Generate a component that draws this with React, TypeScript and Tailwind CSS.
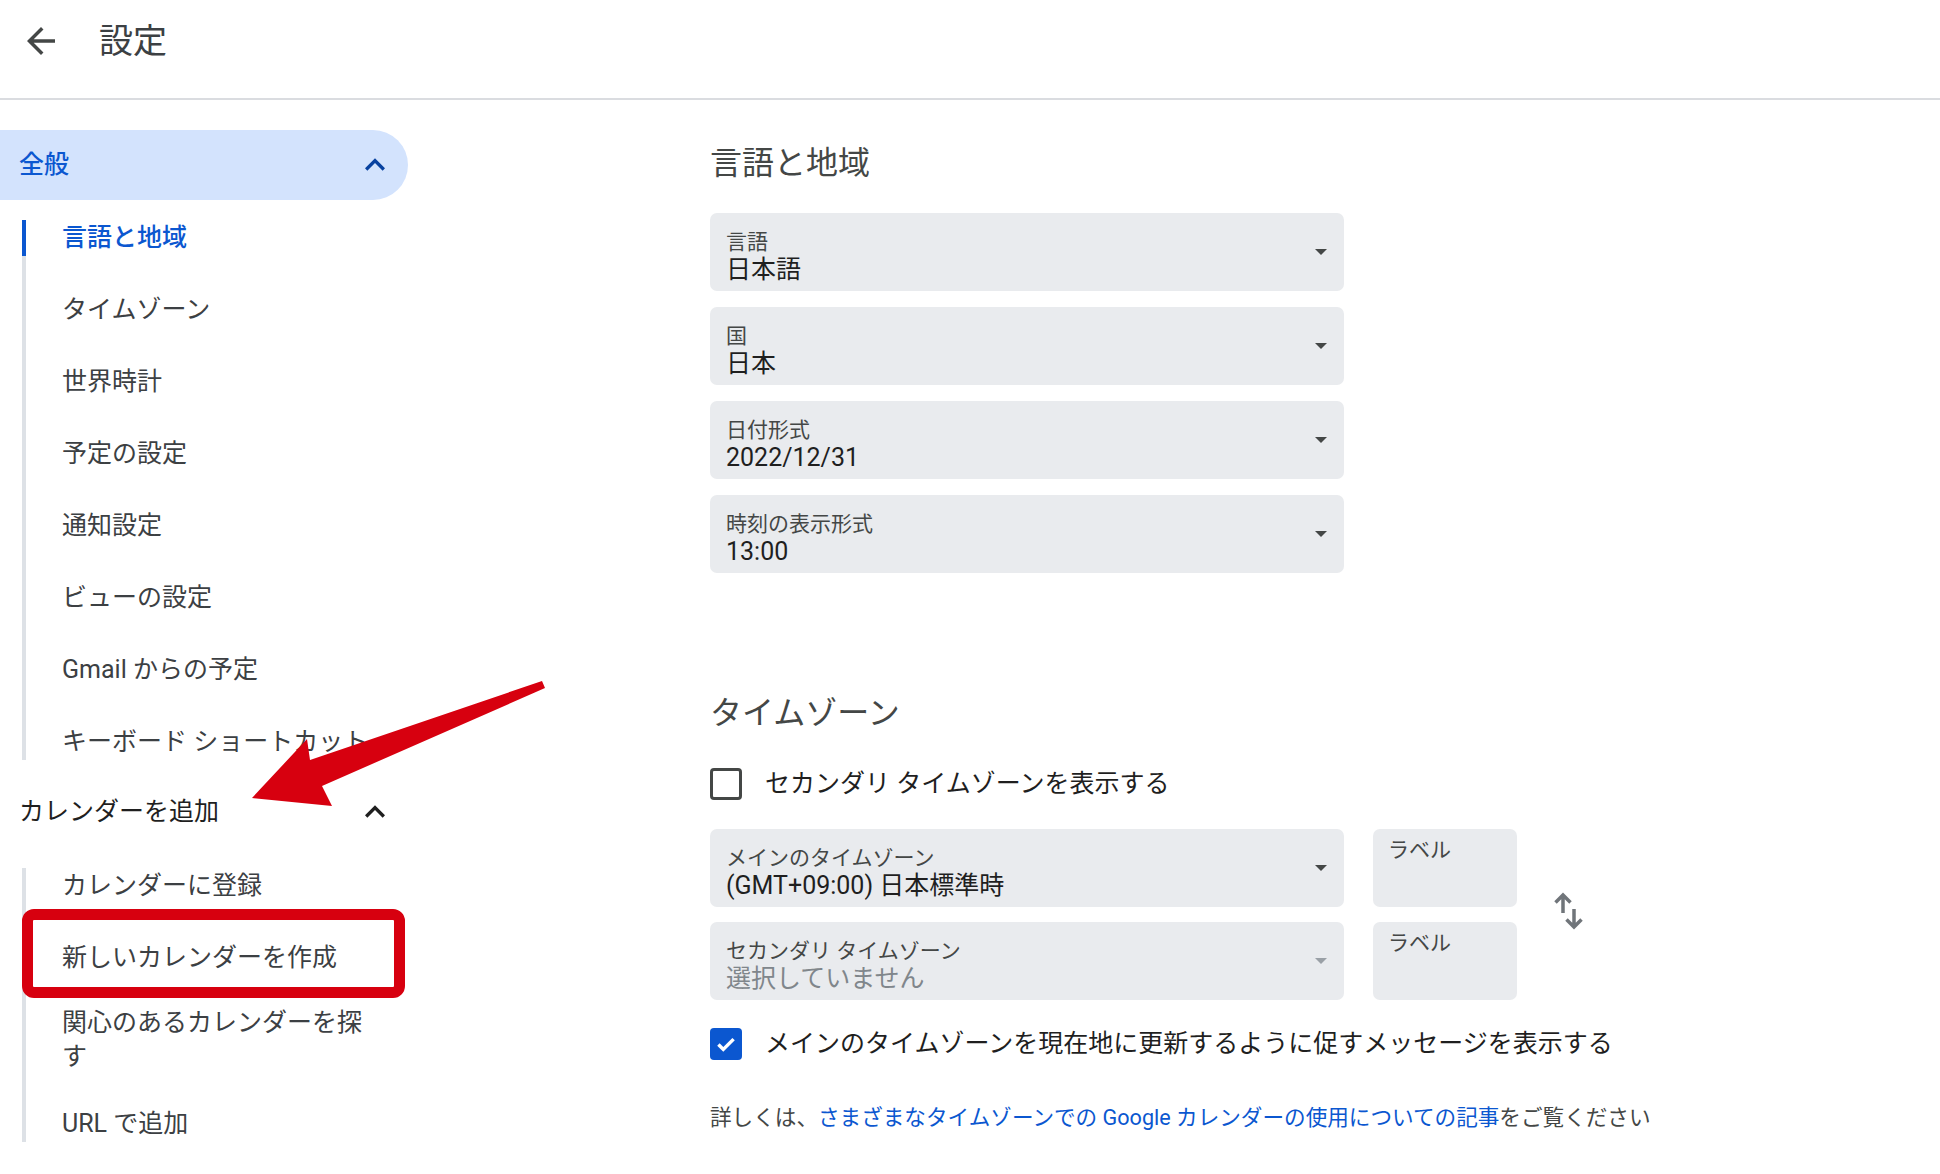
import React from "react";

const FONT = { fontFamily: 'Roboto, "Noto Sans CJK JP", "Noto Sans", sans-serif' };

function ChevronUp({ className }: { className?: string }) {
  return (
    <svg viewBox="0 0 24 24" className={`h-[40px] w-[40px] ${className ?? ""}`} fill="currentColor">
      <path d="M12 8l-6 6 1.41 1.41L12 10.83l4.59 4.58L18 14z" />
    </svg>
  );
}

function Caret({ muted }: { muted?: boolean }) {
  return (
    <svg viewBox="0 0 12 6" className={`h-[6px] w-[12px] shrink-0 ${muted ? "text-[#9aa0a6]" : "text-[#444746]"}`} fill="currentColor">
      <path d="M0 0h12L6 6z" />
    </svg>
  );
}

function Select({ label, value, muted }: { label: string; value: string; muted?: boolean }) {
  return (
    <div className="flex h-[78px] w-[634px] shrink-0 items-center justify-between rounded-[7px] bg-[#e9ebee] pl-[16px] pr-[17px]">
      <div className="mt-[10px] flex flex-col">
        <span className="text-[21px] leading-[26px] text-[#444746]">{label}</span>
        <span className={`text-[25px] leading-[30px] ${muted ? "text-[#80868b]" : "text-[#1f1f1f]"}`}>{value}</span>
      </div>
      <Caret muted={muted} />
    </div>
  );
}

function LabelBox() {
  return (
    <div className="h-[78px] w-[144px] shrink-0 rounded-[7px] bg-[#e9ebee] pl-[15px] pt-[8px] text-[21px] leading-[26px] text-[#444746]">
      ラベル
    </div>
  );
}

const generalItems = [
  "言語と地域",
  "タイムゾーン",
  "世界時計",
  "予定の設定",
  "通知設定",
  "ビューの設定",
  "Gmail からの予定",
  "キーボード ショートカット",
];

export default function App() {
  return (
    <div className="relative h-[1174px] w-[1940px] overflow-hidden bg-white text-[#1f1f1f]" style={FONT}>
      {/* Header */}
      <header className="h-[100px] border-b-2 border-[#dadce0]">
        <div className="flex h-[82px] items-center pl-[20px]">
          <svg viewBox="0 0 24 24" className="h-[42px] w-[42px] text-[#444746]" fill="currentColor">
            <path d="M20 11H7.83l5.59-5.59L12 4l-8 8 8 8 1.41-1.41L7.83 13H20v-2z" />
          </svg>
          <h1 className="ml-[37px] text-[34px] leading-[40px] text-[#3c4043]">設定</h1>
        </div>
      </header>

      <div className="flex">
        {/* Sidebar */}
        <aside className="w-[408px] shrink-0 pt-[30px]">
          <div className="flex h-[70px] items-center justify-between rounded-r-full bg-[#d3e3fd] pl-[19px] pr-[13px]">
            <span className="text-[25px] font-medium leading-[30px] text-[#0b57d0]">全般</span>
            <ChevronUp className="text-[#0842a0]" />
          </div>
          <ul className="ml-[22px] mt-[20px] flex flex-col gap-[36px] border-l-4 border-[#dde1e6]">
            {generalItems.map((item, i) => (
              <li
                key={item}
                className={`relative pl-[36px] pr-[24px] text-[25px] leading-[36px] ${i === 0 ? "font-medium text-[#0b57d0]" : "text-[#3c4043]"}`}
              >
                {i === 0 && <span className="absolute -left-[4px] top-0 h-full w-[4px] bg-[#0b57d0]" />}
                {item}
              </li>
            ))}
          </ul>
          <div className="mt-[16px] flex h-[72px] items-center justify-between pl-[19px] pr-[13px]">
            <span className="text-[25px] leading-[30px] text-[#1f1f1f]">カレンダーを追加</span>
            <ChevronUp className="text-[#1f1f1f]" />
          </div>
          <ul className="ml-[22px] mt-[20px] flex flex-col border-l-4 border-[#dde1e6] text-[25px] text-[#3c4043]">
            <li className="pl-[36px] pr-[24px] leading-[36px]">カレンダーに登録</li>
            <li className="mt-[36px] pl-[36px] pr-[24px] leading-[36px]">新しいカレンダーを作成</li>
            <li className="mt-[30px] pl-[36px] pr-[24px] leading-[34px]">関心のあるカレンダーを探す</li>
            <li className="mt-[32px] pl-[36px] pr-[24px] leading-[36px]">URL で追加</li>
          </ul>
        </aside>

        {/* Content */}
        <main className="ml-[302px] flex flex-col">
          <h2 className="mt-[43px] text-[32px] leading-[40px] text-[#444746]">言語と地域</h2>
          <div className="mt-[30px] flex flex-col gap-[16px]">
            <Select label="言語" value="日本語" />
            <Select label="国" value="日本" />
            <Select label="日付形式" value="2022/12/31" />
            <Select label="時刻の表示形式" value="13:00" />
          </div>

          <h2 className="mt-[120px] text-[32px] leading-[40px] text-[#444746]">タイムゾーン</h2>
          <label className="mt-[35px] flex h-[32px] items-center gap-[23px]">
            <span className="h-[32px] w-[32px] shrink-0 rounded-[4px] border-[3px] border-[#444746]" />
            <span className="text-[25px] leading-[32px] text-[#1f1f1f]">セカンダリ タイムゾーンを表示する</span>
          </label>

          <div className="mt-[29px] flex items-center gap-[36px]">
            <div className="flex flex-col gap-[15px]">
              <div className="flex gap-[29px]">
                <Select label="メインのタイムゾーン" value="(GMT+09:00) 日本標準時" />
                <LabelBox />
              </div>
              <div className="flex gap-[29px]">
                <Select label="セカンダリ タイムゾーン" value="選択していません" muted />
                <LabelBox />
              </div>
            </div>
            <svg viewBox="0 0 32 38" className="-mt-[7px] h-[38px] w-[32px] text-[#70757a]" fill="none" stroke="currentColor" strokeWidth="3.5">
              <path d="M10 21V3M2.5 10.5L10 3l7.5 7.5" />
              <path d="M21 17v18M13.5 27.5L21 35l7.5-7.5" />
            </svg>
          </div>

          <label className="mt-[28px] flex h-[32px] items-center gap-[23px]">
            <span className="flex h-[32px] w-[32px] shrink-0 items-center justify-center rounded-[4px] bg-[#0b57d0]">
              <svg viewBox="0 0 24 24" className="h-[26px] w-[26px]" fill="none" stroke="white" strokeWidth="3.2">
                <path d="M5 12.5l4.5 4.5L19 7.5" />
              </svg>
            </span>
            <span className="whitespace-nowrap text-[25px] leading-[32px] text-[#1f1f1f]">
              メインのタイムゾーンを現在地に更新するように促すメッセージを表示する
            </span>
          </label>

          <p className="mt-[44px] whitespace-nowrap text-[21.6px] leading-[28px] text-[#444746]">
            詳しくは、<span className="text-[#0b57d0]">さまざまなタイムゾーンでの Google カレンダーの使用についての記事</span>をご覧ください
          </p>
        </main>
      </div>

      {/* Annotation: red highlight box */}
      <div className="pointer-events-none absolute left-[22px] top-[909px] h-[89px] w-[383px] rounded-[12px] border-[11px] border-[#d7000f]" />

      {/* Annotation: red arrow */}
      <svg className="pointer-events-none absolute left-0 top-0 h-[1174px] w-[1940px]" viewBox="0 0 1940 1174">
        <polygon points="542,681 545,688 322,786 332,806 252,798 307,739 310,760" fill="#d7000f" />
      </svg>
    </div>
  );
}
